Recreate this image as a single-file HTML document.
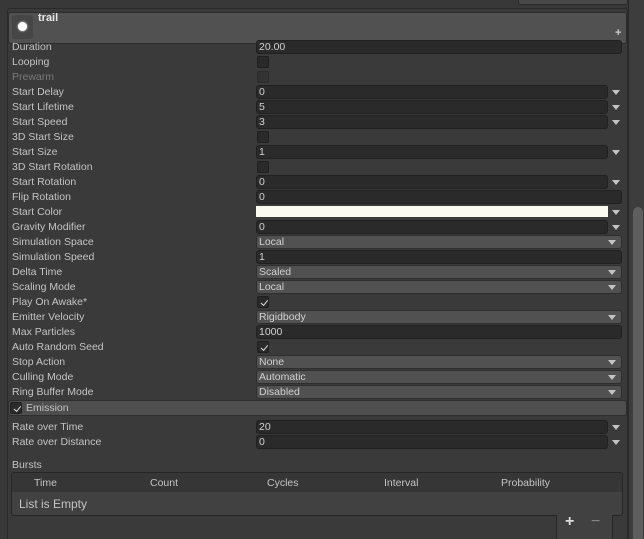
<!DOCTYPE html>
<html style="width:644px;height:539px;overflow:hidden"><head><meta charset="utf-8"><style>
*{margin:0;padding:0;box-sizing:border-box}
body{width:644px;height:539px;background:#383838;font-family:"Liberation Sans",sans-serif;font-size:10.5px;color:#c4c4c4;position:relative;overflow:hidden}
div{position:absolute}
.l{left:12px;height:14px;line-height:14px;white-space:nowrap}
.f{left:256px;width:352px;height:14px;background:#2a2a2a;border:1px solid #202020;border-radius:3px;line-height:12px;padding-left:2px;color:#d2d2d2}
.fw{width:366px}
.d{left:256px;width:366px;height:14px;background:#515151;border:1px solid #2e2e2e;border-radius:3px;line-height:12px;padding-left:2px;color:#d2d2d2}
.d:after{content:"";position:absolute;right:5px;top:4px;border-left:4px solid transparent;border-right:4px solid transparent;border-top:5px solid #c4c4c4}
.a{left:612px;width:0;height:0;border-left:4px solid transparent;border-right:4px solid transparent;border-top:5px solid #c4c4c4}
.c{left:257px;width:12px;height:12px;background:#2a2a2a;border:1px solid #1f1f1f;border-radius:2px}
.k:after{content:"";position:absolute;left:2px;top:1px;width:6px;height:3px;border-left:1px solid #ddd;border-bottom:1px solid #ddd;transform:rotate(-50deg) translate(-1px,2px)}
</style></head><body>
<div style="left:518px;top:-6px;width:110px;height:11px;background:#484848;border:1px solid #2a2a2a;border-radius:3px"></div>
<div style="left:7px;top:8px;width:621px;height:540px;background:#3a3a3a;border:1px solid #2a2a2a;border-radius:3px"></div>
<div style="left:8px;top:12px;width:619px;height:32px;background:#515151;border:1px solid #2c2c2c;border-radius:3px"></div>
<div style="left:12px;top:15px;width:21px;height:24px;background:#464646;border-radius:3px"></div>
<div style="left:18px;top:22px;width:9px;height:9px;background:#fff;border-radius:50%;box-shadow:0 0 2px #fff"></div>
<div style="left:38px;top:12px;color:#e6e6e6;font-weight:bold;font-size:11px">trail</div>
<div style="left:615px;top:27px;color:#ccc;font-size:11px;font-weight:bold">+</div>

<div style="left:0;top:1px;width:644px;height:539px">
<div class="l" style="top:39px">Duration</div><div class="f fw" style="top:39px">20.00</div>
<div class="l" style="top:54px">Looping</div><div class="c" style="top:55px"></div>
<div class="l" style="top:69px;color:#7a7a7a">Prewarm</div><div class="c" style="top:70px;background:#333;border-color:#2a2a2a"></div>
<div class="l" style="top:84px">Start Delay</div><div class="f" style="top:84px">0</div><div class="a" style="top:89px"></div>
<div class="l" style="top:99px">Start Lifetime</div><div class="f" style="top:99px">5</div><div class="a" style="top:104px"></div>
<div class="l" style="top:114px">Start Speed</div><div class="f" style="top:114px">3</div><div class="a" style="top:119px"></div>
<div class="l" style="top:129px">3D Start Size</div><div class="c" style="top:130px"></div>
<div class="l" style="top:144px">Start Size</div><div class="f" style="top:144px">1</div><div class="a" style="top:149px"></div>
<div class="l" style="top:159px">3D Start Rotation</div><div class="c" style="top:160px"></div>
<div class="l" style="top:174px">Start Rotation</div><div class="f" style="top:174px">0</div><div class="a" style="top:179px"></div>
<div class="l" style="top:189px">Flip Rotation</div><div class="f fw" style="top:189px">0</div>
<div class="l" style="top:204px">Start Color</div><div style="left:256px;top:205px;width:352px;height:11px;background:#fafaf0"></div><div class="a" style="top:209px"></div>
<div class="l" style="top:219px">Gravity Modifier</div><div class="f" style="top:219px">0</div><div class="a" style="top:224px"></div>
<div class="l" style="top:234px">Simulation Space</div><div class="d" style="top:234px">Local</div>
<div class="l" style="top:249px">Simulation Speed</div><div class="f fw" style="top:249px">1</div>
<div class="l" style="top:264px">Delta Time</div><div class="d" style="top:264px">Scaled</div>
<div class="l" style="top:279px">Scaling Mode</div><div class="d" style="top:279px">Local</div>
<div class="l" style="top:294px">Play On Awake*</div><div class="c k" style="top:295px"></div>
<div class="l" style="top:309px">Emitter Velocity</div><div class="d" style="top:309px">Rigidbody</div>
<div class="l" style="top:324px">Max Particles</div><div class="f fw" style="top:324px">1000</div>
<div class="l" style="top:339px">Auto Random Seed</div><div class="c k" style="top:340px"></div>
<div class="l" style="top:354px">Stop Action</div><div class="d" style="top:354px">None</div>
<div class="l" style="top:369px">Culling Mode</div><div class="d" style="top:369px">Automatic</div>
<div class="l" style="top:384px">Ring Buffer Mode</div><div class="d" style="top:384px">Disabled</div>

<div style="left:8px;top:399px;width:619px;height:16px;background:#4e4e4e;border:1px solid #2e2e2e;border-radius:3px"></div>
<div class="c k" style="left:10px;top:401px"></div>
<div class="l" style="left:26px;top:400px">Emission</div>
<div class="l" style="top:419px">Rate over Time</div><div class="f" style="top:419px">20</div><div class="a" style="top:424px"></div>
<div class="l" style="top:434px">Rate over Distance</div><div class="f" style="top:434px">0</div><div class="a" style="top:439px"></div>
<div class="l" style="top:457px">Bursts</div>
<div style="left:11px;top:471px;width:612px;height:21px;background:#363636;border:1px solid #262626;border-radius:3px 3px 0 0"></div>
<div class="l" style="left:34px;top:475px">Time</div>
<div class="l" style="left:150px;top:475px">Count</div>
<div class="l" style="left:267px;top:475px">Cycles</div>
<div class="l" style="left:384px;top:475px">Interval</div>
<div class="l" style="left:501px;top:475px">Probability</div>
<div style="left:11px;top:491px;width:612px;height:24px;background:#414141;border:1px solid #262626;border-top:none;border-radius:0 0 3px 3px"></div>
<div class="l" style="left:19px;top:496px;font-size:12px">List is Empty</div>
<div style="left:556px;top:514px;width:57px;height:30px;background:#414141;border:1px solid #262626;border-top:none;border-radius:0 0 3px 3px"></div>
<div style="left:565px;top:512px;font-size:16px;color:#ddd;font-weight:bold">+</div>
<div style="left:591px;top:512px;font-size:16px;color:#888">−</div>
</div>

<div style="left:628px;top:0;width:16px;height:539px;background:#3d3d3d;border-left:1px solid #2a2a2a"></div>
<div style="left:633px;top:207px;width:10px;height:340px;background:#5e5e5e;border-radius:5px"></div>
</body></html>
